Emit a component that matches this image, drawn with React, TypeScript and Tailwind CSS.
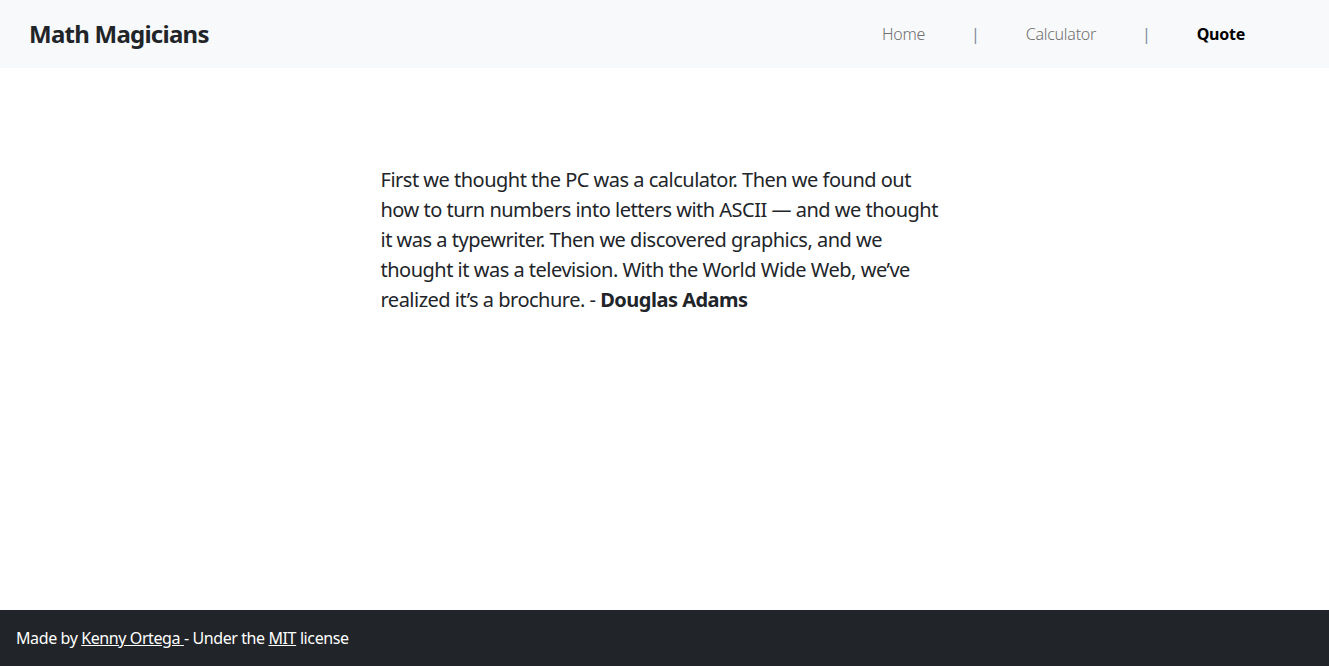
const font = "font-['Noto_Sans','Open_Sans',sans-serif]";

const NAV = [
  { label: "Home", active: false },
  { label: "Calculator", active: false },
  { label: "Quote", active: true },
];

export default function App() {
  return (
    <div className={`min-h-screen flex flex-col bg-white text-[#212529] ${font}`}>
      {/* Header */}
      <header className="h-[68px] bg-[#f8f9fa] flex items-center justify-between pl-[29px] pr-[84px]">
        <h1 className="text-[24px] font-bold tracking-[-0.75px]">Math Magicians</h1>
        <nav className="flex items-center gap-[46px] text-[16px] tracking-[-0.25px]">
          {NAV.map((item, i) => (
            <div key={item.label} className="flex items-center gap-[46px]">
              {i > 0 && <span className="text-[#7b8a9a]">|</span>}
              <a
                href="#"
                className={item.active ? "font-bold text-black" : "font-light text-[#6f6f6f]"}
              >
                {item.label}
              </a>
            </div>
          ))}
        </nav>
      </header>

      {/* Quote */}
      <main className="flex-1 flex justify-center pt-[97px]">
        <p className="w-[568px] text-[20px] leading-[30px] tracking-[-0.5px]">
          First we thought the PC was a calculator. Then we found out how to turn numbers into
          letters with ASCII — and we thought it was a typewriter. Then we discovered graphics, and
          we thought it was a television. With the World Wide Web, we’ve realized it’s a brochure. -{" "}
          <strong className="font-bold">Douglas Adams</strong>
        </p>
      </main>

      {/* Footer */}
      <footer className="h-[56px] bg-[#212529] text-white text-[16px] tracking-[-0.4px] flex items-center px-4">
        <p>
          Made by{" "}
          <a href="#" className="underline">
            Kenny Ortega{" "}
          </a>
          - Under the{" "}
          <a href="#" className="underline">
            MIT
          </a>{" "}
          license
        </p>
      </footer>
    </div>
  );
}
